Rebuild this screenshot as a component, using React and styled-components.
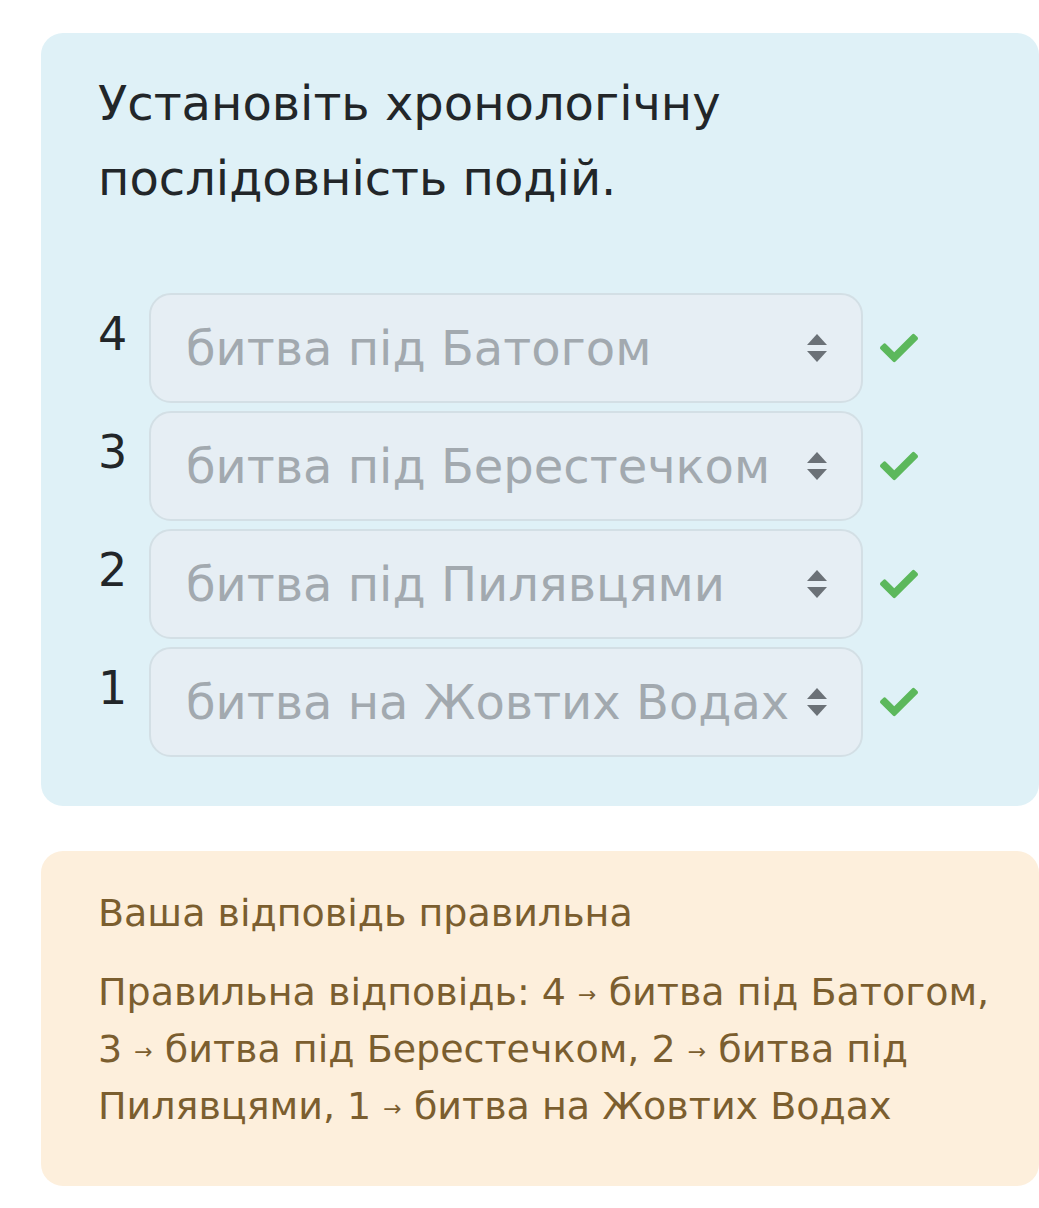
import { Fragment } from 'react';
import styled, { createGlobalStyle } from 'styled-components';
import { FaCheck } from 'react-icons/fa';

const _items = [
  { num: 4, label: 'битва під Батогом' },
  { num: 3, label: 'битва під Берестечком' },
  { num: 2, label: 'битва під Пилявцями' },
  { num: 1, label: 'битва на Жовтих Водах' },
];

// "Правильна відповідь: 4 → битва під Батогом, 3 → ..." split into words
const _answerWords = ['Правильна', 'відповідь:'].concat(
  ..._items.map((item, i) => {
    const words = [String(item.num), '→', ...item.label.split(' ')];
    if (i < _items.length - 1) words[words.length - 1] += ',';
    return words;
  })
);

const GlobalStyle = createGlobalStyle`
  html, body {
    margin: 0;
    padding: 0;
    background: #ffffff;
  }
  body {
    font-family: "DejaVu Sans", "Noto Sans", sans-serif;
  }
`;

const SortArrows = () => (
  <svg width="24" height="30" viewBox="0 0 24 30">
    <path d="M12 1 L22 12 L2 12 Z" fill="#6b7177" />
    <path d="M12 29 L22 18 L2 18 Z" fill="#6b7177" />
  </svg>
);

const App = () => {
  return (
    <Page>
      <GlobalStyle />
      <QuestionCard>
        <Title>Установіть хронологічну послідовність подій.</Title>
        <List>
          {_items.map((item) => (
            <Row key={item.num}>
              <Num>{item.num}</Num>
              <Select>
                <SelectText>{item.label}</SelectText>
                <SortArrows />
              </Select>
              <Check>
                <FaCheck size={38} />
              </Check>
            </Row>
          ))}
        </List>
      </QuestionCard>
      <FeedbackCard>
        <FeedbackLine>Ваша відповідь правильна</FeedbackLine>
        <FeedbackText>
          {_answerWords.map((w, i) => (
            <Fragment key={i}>
              {i > 0 && ' '}
              {w === '→' ? <Arrow>→</Arrow> : <Word>{w}</Word>}
            </Fragment>
          ))}
        </FeedbackText>
      </FeedbackCard>
    </Page>
  );
}

const Page = styled.div`
  padding: 33px 0 22px 41px;
  display: flex;
  flex-direction: column;
  gap: 45px;
`;

const QuestionCard = styled.div`
  background: #dff1f7;
  border-radius: 22px;
  padding: 33px 40px 49px 57px;
`;

const Title = styled.h1`
  margin: 0 0 77px 0;
  font-size: 48px;
  font-weight: 400;
  line-height: 75px;
  color: #222629;
  max-width: 700px;
`;

const List = styled.div`
  display: flex;
  flex-direction: column;
  gap: 8px;
`;

const Row = styled.div`
  display: flex;
  align-items: flex-start;
`;

const Num = styled.div`
  width: 51px;
  padding-top: 16px;
  font-size: 46px;
  line-height: 50px;
  color: #222629;
`;

const Select = styled.div`
  width: 714px;
  height: 110px;
  box-sizing: border-box;
  border: 2px solid #d3dfe5;
  border-radius: 22px;
  background: #e6eef4;
  display: flex;
  align-items: center;
  justify-content: space-between;
  padding: 0 32px 0 35px;
`;

const SelectText = styled.span`
  font-size: 48px;
  color: #a2a9af;
  white-space: nowrap;
`;

const Check = styled.div`
  align-self: center;
  margin-left: 17px;
  color: #5cb85c;
  display: flex;
`;

const FeedbackCard = styled.div`
  background: #fdefdc;
  border-radius: 22px;
  padding: 34px 40px 51px 57px;
  color: #7b5e2f;
`;

const FeedbackLine = styled.p`
  margin: 0 0 22px 0;
  font-size: 38px;
  line-height: 57px;
`;

const FeedbackText = styled.p`
  margin: 0;
  font-size: 38px;
  line-height: 57px;
  max-width: 900px;
`;

const Word = styled.span`
  white-space: nowrap;
`;

const Arrow = styled.span`
  font-size: 22px;
  line-height: 22px;
  vertical-align: 3px;
`;

export default App;
